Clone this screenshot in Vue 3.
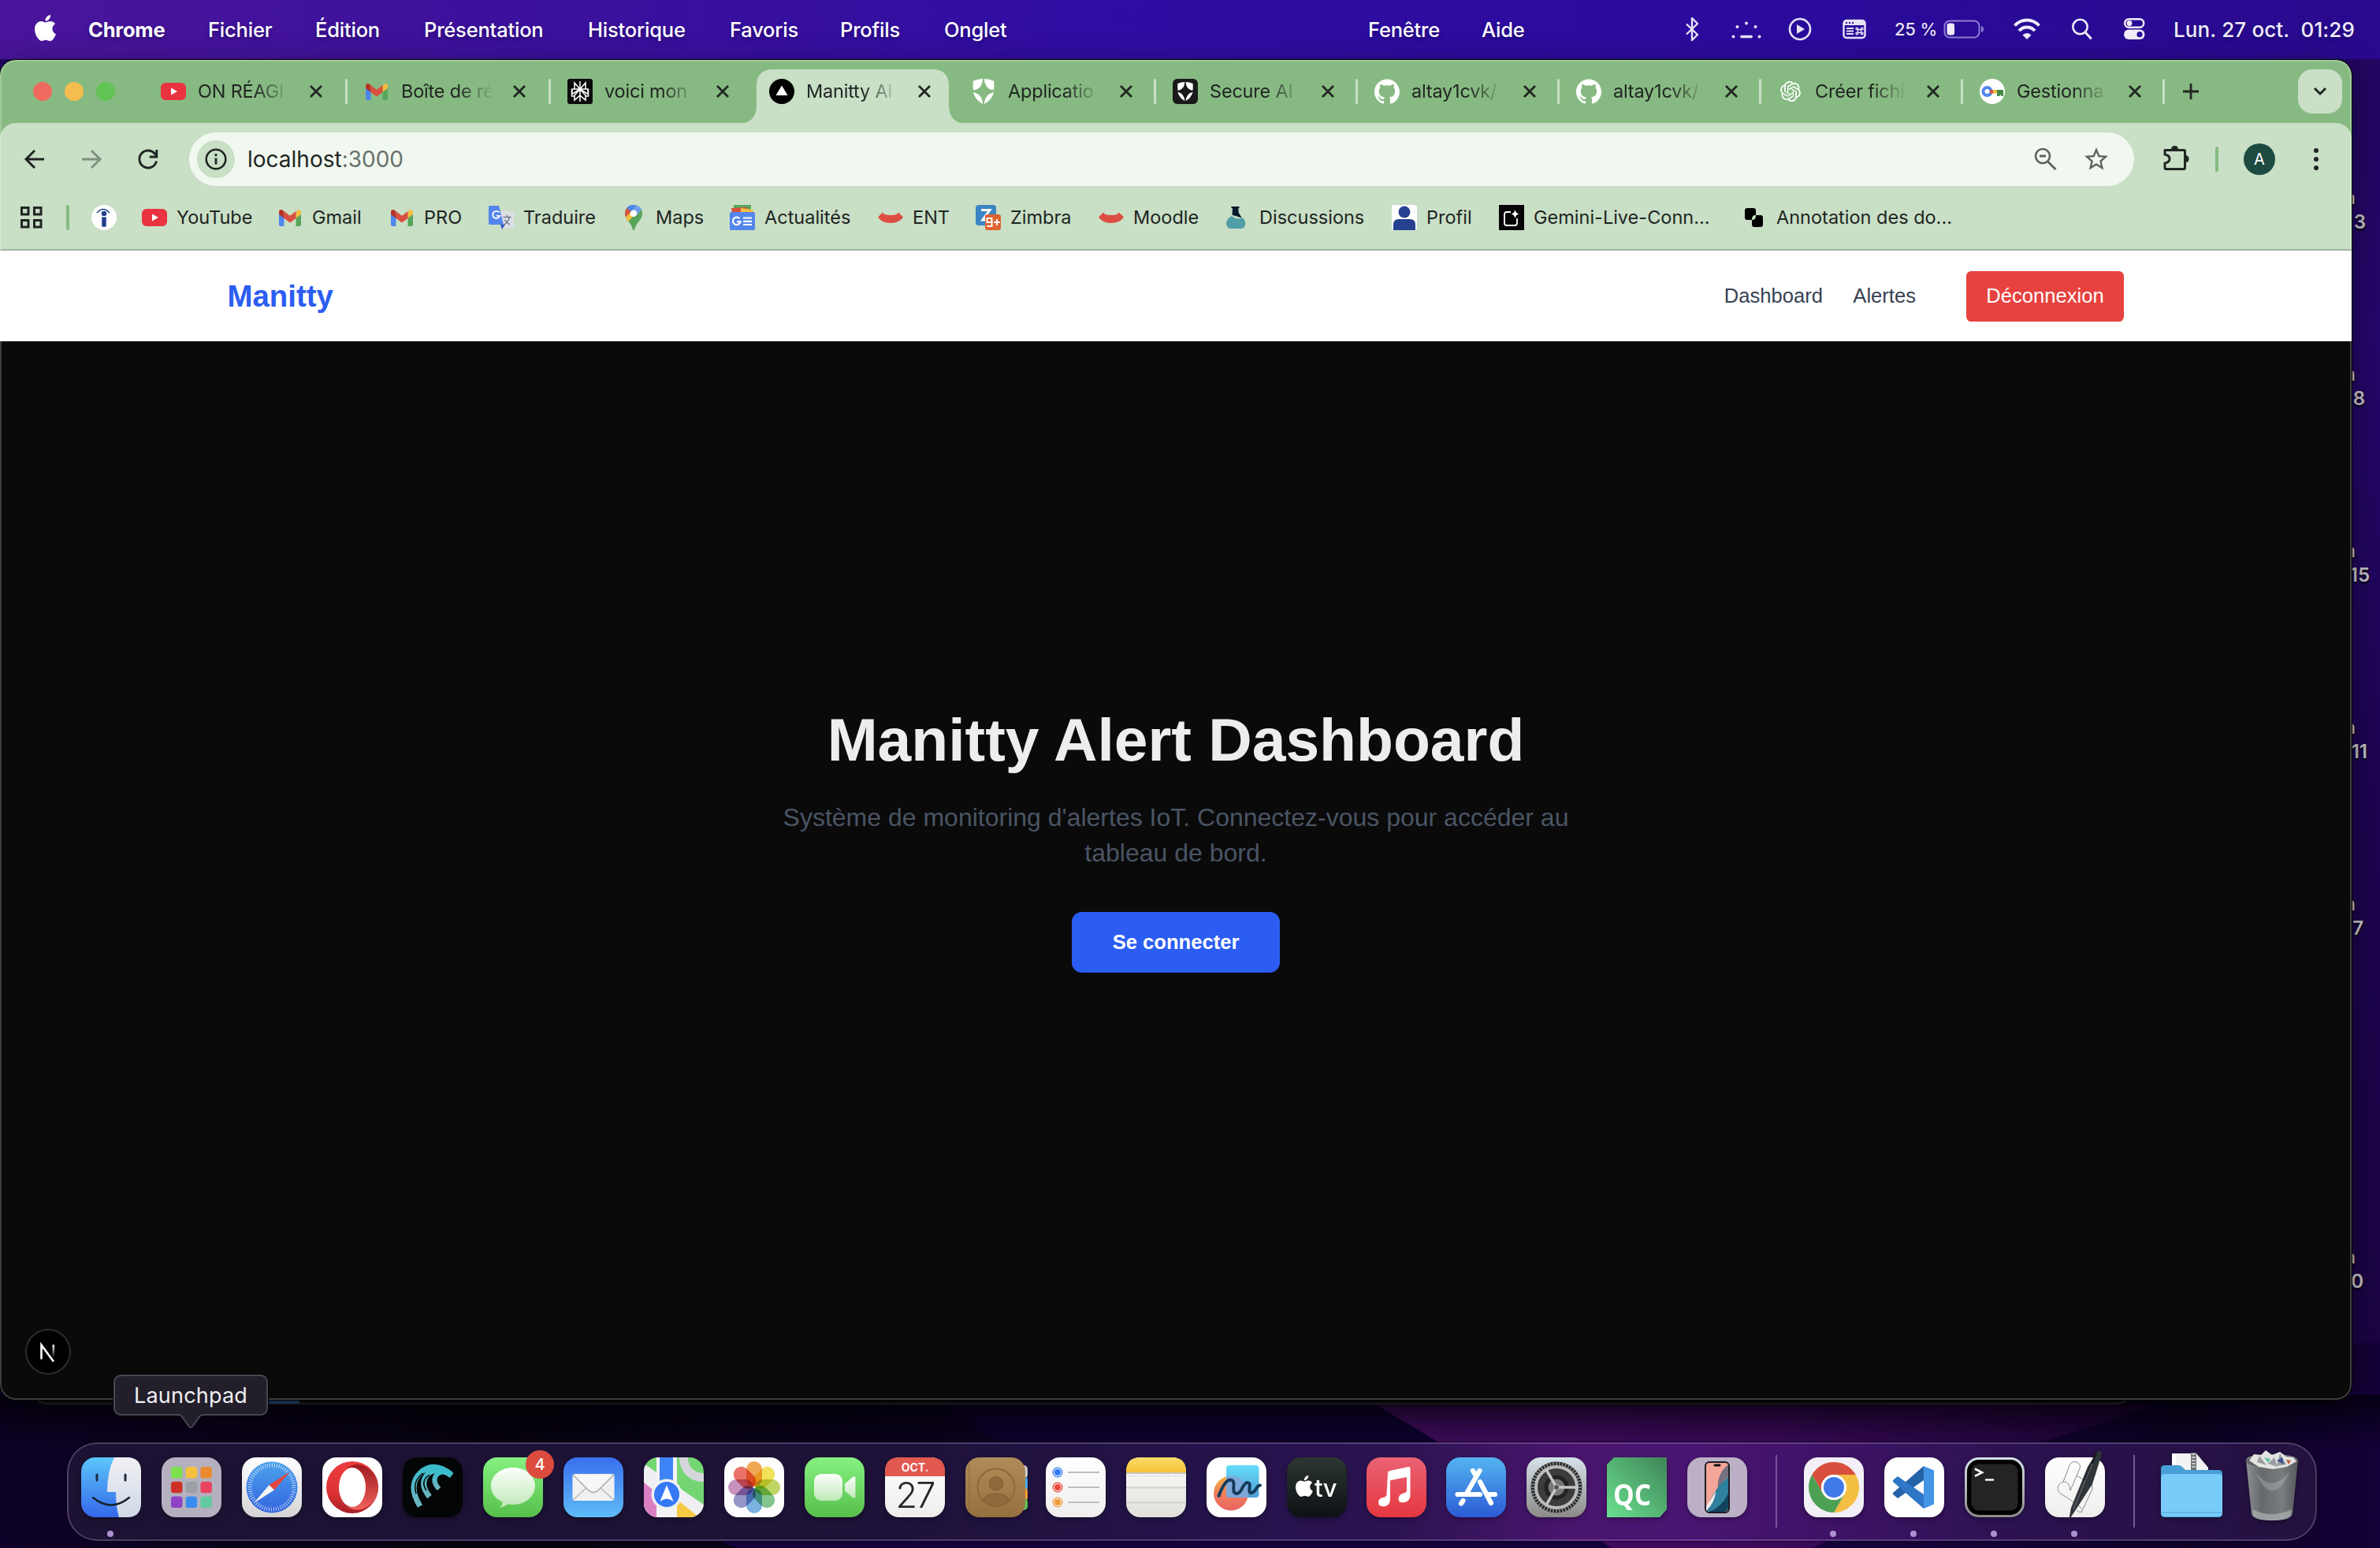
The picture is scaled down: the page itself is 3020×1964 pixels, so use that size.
<script setup>
const menus = [
  { label: 'Chrome', w: 152, strong: true },
  { label: 'Fichier', w: 136 },
  { label: 'Édition', w: 138 },
  { label: 'Présentation', w: 208 },
  { label: 'Historique', w: 180 },
  { label: 'Favoris', w: 140 },
  { label: 'Profils', w: 132 },
  { label: 'Onglet', w: 538 },
  { label: 'Fenêtre', w: 144 },
  { label: 'Aide', w: 257 }
]

const APPLE = 'M12.152 6.896c-.948 0-2.415-1.078-3.96-1.04-2.04.027-3.91 1.183-4.961 3.014-2.117 3.675-.546 9.103 1.519 12.09 1.013 1.454 2.208 3.09 3.792 3.039 1.52-.065 2.09-.987 3.935-.987 1.831 0 2.35.987 3.96.948 1.637-.026 2.676-1.48 3.676-2.948 1.156-1.688 1.636-3.325 1.662-3.415-.039-.013-3.182-1.221-3.22-4.857-.026-3.04 2.48-4.494 2.597-4.559-1.429-2.09-3.623-2.324-4.39-2.376-2-.156-3.675 1.09-4.61 1.09zM15.53 3.83c.843-1.012 1.4-2.427 1.245-3.83-1.207.052-2.662.805-3.532 1.818-.78.896-1.454 2.338-1.273 3.714 1.338.104 2.715-.688 3.559-1.701'
const GITHUB = 'M12 .297c-6.63 0-12 5.373-12 12 0 5.303 3.438 9.8 8.205 11.385.6.113.82-.258.82-.577 0-.285-.01-1.04-.015-2.04-3.338.724-4.042-1.61-4.042-1.61C4.422 18.07 3.633 17.7 3.633 17.7c-1.087-.744.084-.729.084-.729 1.205.084 1.838 1.236 1.838 1.236 1.07 1.835 2.809 1.305 3.495.998.108-.776.417-1.305.76-1.605-2.665-.3-5.466-1.332-5.466-5.93 0-1.31.465-2.38 1.235-3.22-.135-.303-.54-1.523.105-3.176 0 0 1.005-.322 3.3 1.23.96-.267 1.98-.399 3-.405 1.02.006 2.04.138 3 .405 2.28-1.552 3.285-1.23 3.285-1.23.645 1.653.24 2.873.12 3.176.765.84 1.23 1.91 1.23 3.22 0 4.61-2.805 5.625-5.475 5.92.42.36.81 1.096.81 2.22 0 1.606-.015 2.896-.015 3.286 0 .315.21.69.825.57C20.565 22.092 24 17.592 24 12.297c0-6.627-5.373-12-12-12'
const OPENAI = 'M22.2819 9.8211a5.9847 5.9847 0 0 0-.5157-4.9108 6.0462 6.0462 0 0 0-6.5098-2.9A6.0651 6.0651 0 0 0 4.9807 4.1818a5.9847 5.9847 0 0 0-3.9977 2.9 6.0462 6.0462 0 0 0 .7427 7.0966 5.98 5.98 0 0 0 .511 4.9107 6.051 6.051 0 0 0 6.5146 2.9001A5.9847 5.9847 0 0 0 13.2599 24a6.0557 6.0557 0 0 0 5.7718-4.2058 5.9894 5.9894 0 0 0 3.9977-2.9001 6.0557 6.0557 0 0 0-.7475-7.0729zm-9.022 12.6081a4.4755 4.4755 0 0 1-2.8764-1.0408l.1419-.0804 4.7783-2.7582a.7948.7948 0 0 0 .3927-.6813v-6.7369l2.02 1.1686a.071.071 0 0 1 .038.052v5.5826a4.504 4.504 0 0 1-4.4945 4.4944zm-9.6607-4.1254a4.4708 4.4708 0 0 1-.5346-3.0137l.142.0852 4.783 2.7582a.7712.7712 0 0 0 .7806 0l5.8428-3.3685v2.3324a.0804.0804 0 0 1-.0332.0615L9.74 19.9502a4.4992 4.4992 0 0 1-6.1408-1.6464zM2.3408 7.8956a4.485 4.485 0 0 1 2.3655-1.9728V11.6a.7664.7664 0 0 0 .3879.6765l5.8144 3.3543-2.0201 1.1685a.0757.0757 0 0 1-.071 0l-4.8303-2.7865A4.504 4.504 0 0 1 2.3408 7.872zm16.5963 3.8558L13.1038 8.364 15.1192 7.2a.0757.0757 0 0 1 .071 0l4.8303 2.7913a4.4944 4.4944 0 0 1-.6765 8.1042v-5.6772a.79.79 0 0 0-.407-.667zm2.0107-3.0231l-.142-.0852-4.7735-2.7818a.7759.7759 0 0 0-.7854 0L9.409 9.2297V6.8974a.0662.0662 0 0 1 .0284-.0615l4.8303-2.7866a4.4992 4.4992 0 0 1 6.6802 4.66zM8.3065 12.863l-2.02-1.1638a.0804.0804 0 0 1-.038-.0567V6.0742a4.4992 4.4992 0 0 1 7.3757-3.4537l-.142.0805L8.704 5.459a.7948.7948 0 0 0-.3927.6813zm1.0976-2.3654l2.602-1.4998 2.6069 1.4998v2.9994l-2.5974 1.4997-2.6067-1.4997Z'

const shield = '<path d="M15.200 0Q9 .3 2.700 2.700V12.500q.1 2 2 1.800Q14.500 12 15.200 0zM16.800 0Q23 .3 29.300 2.700V12.500q-.1 2-2 1.800Q17.500 12 16.800 0zM2.700 17Q14 19 15.200 32 6 27.500 2.700 17zM29.300 17Q18 19 16.800 32 26 27.500 29.300 17z"/>'
const curve = '<path d="M0 15.500L6 9.500q1.500 3.500 10 3.500t10-3.500l6 6q-5 7.500-16 7.500T0 15.500z" fill="#dc4e41"/>'

// Favicons share a 32-unit square.
const fav = {
  youtube: '<rect y="5" width="32" height="22" rx="6" fill="#ea3340"/><path d="M13 11.500v9l8-4.500z" fill="#fff"/>',
  gmail: '<path d="M2 9v16q0 2 2 2h4.500V13z" fill="#4f86ec"/><path d="M30 9v16q0 2-2 2h-4.500V13z" fill="#58a55c"/><path d="M23.500 8.500l2-1.800C27.500 5 30 6.500 30 9v3l-6.500 5z" fill="#f2be42"/><path d="M8.500 8v9l7.500 5.500 7.500-5.500V8L16 13.700z" fill="#d95040"/><path d="M2 9c0-2.500 2.500-4 4.500-2.300l2 1.600V17L2 12z" fill="#b63125"/>',
  perplexity: '<rect width="32" height="32" rx="3" fill="#0a0a0a"/><g fill="none" stroke="#fff" stroke-width="1.500"><path d="M16 3v26M9 5v8h14V5l-7 8zM16 13L6 19.500V13h4M16 13l10 6.500V13h-4M16 13l-7 8v6l7-6 7 6v-6zM5.500 13v9H9M26.500 13v9H23"/></g>',
  vercel: '<circle cx="16" cy="16" r="16" fill="#000"/><path d="M16 8.500l7.500 12.500H8.500z" fill="#fff"/>',
  auth: `<g fill="#fff">${shield}</g>`,
  authDark: `<rect width="32" height="32" rx="6" fill="#191919"/><g fill="#fff" transform="translate(4.300 4) scale(.73 .75)">${shield}</g>`,
  github: `<path fill="#fff" transform="scale(1.333)" d="${GITHUB}"/>`,
  openai: `<path fill="#fff" transform="translate(3 3) scale(1.080)" d="${OPENAI}"/>`,
  gcloud: '<circle cx="16" cy="16" r="16" fill="#fff"/><circle cx="9.500" cy="16" r="5" fill="none" stroke="#4f86ec" stroke-width="4"/><path d="M13 14h5v4.500h-5z" fill="#d95040"/><path d="M17 14h6v4.500h-6z" fill="#f2be42"/><path d="M22 14h8v8h-2.500l-1-2-1.500 2h-3z" fill="#3f8a45"/>',
  ifac: '<circle cx="16" cy="16" r="16" fill="#fff"/><circle cx="16" cy="11" r="3.300" fill="#24408e"/><path d="M13.200 15.500h5.600V27q-2.800 2-5.600 0z" fill="#24408e"/><path d="M7 10q8-9 16 0" fill="none" stroke="#24408e" stroke-width="1.600"/>',
  translate: '<path d="M13 8h17q2 0 2 2v18q0 2-2 2H18z" fill="#dcdfe3"/><path d="M15 25h6l-4 6z" fill="#3157b8"/><path d="M2 1h11l6 24H2q-2 0-2-2V3q0-2 2-2z" fill="#5386ec"/><path d="M13.500 9.500a4.600 4.600 0 1 0 .8 4.300H9.800" fill="none" stroke="#fff" stroke-width="1.800"/><path d="M18.500 15.500h10M23.500 13v2.500M26.500 16q-2 6-7 9M20.500 19q3 4 6.500 6" fill="none" stroke="#6c7f92" stroke-width="1.400"/>',
  maps: '<path d="M16 0C9 0 5 5 5 11c0 4 1.500 6.500 4 9.500 3.500 4 5 7 5.600 10 .4 2 2.400 2 2.800 0 .6-3 2-6 5.600-10 2.500-3 4-5.500 4-9.500C27 5 23 0 16 0z" fill="#58a55c"/><path d="M16 0C12 0 9 1.500 7.300 4L13 8.500 19.500.6Q18 0 16 0z" fill="#4f86ec"/><path d="M7.300 4Q5 7 5 11q0 2.500.9 4.500L13 8.500z" fill="#d95040"/><path d="M19.500.6L13 8.500l6 5.500 7-8Q24 2 19.500.6z" fill="#6fa0ee"/><path d="M5.900 15.500Q7 18 9.500 21l9.500-11-6-1.500z" fill="#f2be42"/><circle cx="16" cy="10.800" r="4.300" fill="#fff"/>',
  news: '<path d="M5 0h22v10H5z" fill="#58a55c"/><path d="M2 4l20-1 2 8H3z" fill="#d95040"/><path d="M14 4l16 2-1 6H14z" fill="#f2be42"/><rect y="9" width="32" height="23" rx="2" fill="#5386ec"/><path d="M12.500 17.300a4.800 4.800 0 1 0 1 3.900H9M17 16.500h11M17 20.800h11M17 25h11" fill="none" stroke="#fff" stroke-width="2.200"/>',
  curve,
  zimbra: '<rect width="26" height="26" rx="4" fill="#3c84c4"/><path d="M7 6.500h11L9 19h8" fill="none" stroke="#fff" stroke-width="3"/><rect x="12" y="12" width="20" height="20" rx="3" fill="#e0622f"/><g fill="none" stroke="#fff" stroke-width="2"><rect x="14.500" y="17" width="6" height="5"/><path d="M20.500 22v5h-6M23 22h8M27 18v8"/></g>',
  flask: '<path d="M8.500 2h10v2.200h-1.200l.5 5.800 4 6.500-7.800-2.500-4.500-1.200.5-8.600h-1.500z" fill="#04192b"/><path d="M9 14q4 3.500 8.500 3.500l5.500-1q3.500 3.500 3.200 7.500-.7 6-6 6H8q-5.500-.5-6-6Q2 17.500 9 14z" fill="#519ea8"/>',
  profil: '<rect width="32" height="32" rx="3" fill="#fff"/><circle cx="16" cy="9" r="7.500" fill="#26418f"/><path d="M2 32V25q0-7 7-7h14q7 0 7 7v7z" fill="#26418f"/>',
  gemini: '<rect width="32" height="32" fill="#050505"/><path d="M15 9H10q-3 0-3 3v11q0 3 3 3h10q3 0 3-3v-6" fill="none" stroke="#fff" stroke-width="1.800"/><path d="M20.500 6q.8 4.600 5 5.500-4.200.9-5 5.500-.8-4.600-5-5.500 4.200-.9 5-5.500z" fill="#fff"/>',
  annot: '<rect x="4" y="4" width="14" height="15" rx="3" fill="#000"/><rect x="13" y="13" width="14" height="15" rx="3" fill="#000"/><path d="M13 18q0-5 5-5v1q0 5-5 5z" fill="#c9dfc6"/>'
}

const tabs = [
  { icon: 'youtube', title: 'ON RÉAGI', w: 258 },
  { icon: 'gmail', title: 'Boîte de ré', w: 258 },
  { icon: 'perplexity', title: 'voici mon', w: 256, last: true },
  { icon: 'vercel', title: 'Manitty Al', w: 256, active: true, last: true },
  { icon: 'auth', title: 'Applicatio', w: 256 },
  { icon: 'authDark', title: 'Secure AI', w: 256 },
  { icon: 'github', title: 'altay1cvk/', w: 256 },
  { icon: 'github', title: 'altay1cvk/', w: 256 },
  { icon: 'openai', title: 'Créer fichi', w: 256 },
  { icon: 'gcloud', title: 'Gestionna', w: 256 }
]

const bookmarks = [
  { icon: 'ifac', label: '', w: 64 },
  { icon: 'youtube', label: 'YouTube', w: 172 },
  { icon: 'gmail', label: 'Gmail', w: 142 },
  { icon: 'gmail', label: 'PRO', w: 126 },
  { icon: 'translate', label: 'Traduire', w: 168 },
  { icon: 'maps', label: 'Maps', w: 138 },
  { icon: 'news', label: 'Actualités', w: 188 },
  { icon: 'curve', label: 'ENT', w: 124 },
  { icon: 'zimbra', label: 'Zimbra', w: 156 },
  { icon: 'curve', label: 'Moodle', w: 160 },
  { icon: 'flask', label: 'Discussions', w: 212 },
  { icon: 'profil', label: 'Profil', w: 136 },
  { icon: 'gemini', label: 'Gemini-Live-Conn...', w: 308 },
  { icon: 'annot', label: 'Annotation des do...', w: 280 }
]

const bg = (fill) => `<rect width="76" height="76" rx="18" fill="${fill}"/>`
const petals = ['#f09a37', '#f2e03f', '#b5d04a', '#6dbd7c', '#64a7dc', '#8583c0', '#c07fb4', '#ea5a4f']
const pads = ['#7be04c', '#f4c23d', '#e98a2c', '#cf3127', '#9aa0a4', '#ea4560', '#8f42c4', '#3a8df0', '#62c9a0']
const gearTicks = Array.from({ length: 48 }, (_, i) => `<path d="M38 5.500v4.500" transform="rotate(${i * 7.5} 38 38)" stroke="#8d8f90" stroke-width="1.500"/>`).join('')

// Dock artwork shares a 76-unit square.
const art = {
  finder: bg('url(#gFinder)') + '<path d="M42 0h16q18 0 18 18v40q0 18-18 18H48q-4-14-4-32H33q0-26 9-44z" fill="url(#gFace)"/><path d="M20 22v7M56 22v7" stroke="#1c2b3d" stroke-width="3" stroke-linecap="round"/><path d="M15 51q23 19 46 0" fill="none" stroke="#16202c" stroke-width="2.400" stroke-linecap="round"/>',
  launchpad: bg('#b4b0bf') + pads.map((c, i) => `<rect x="${12 + (i % 3) * 18.700}" y="${12 + Math.floor(i / 3) * 18.700}" width="14.500" height="14.500" rx="3.500" fill="${c}"/>`).join(''),
  safari: bg('url(#gSafari)') + '<circle cx="38" cy="38" r="32.500" fill="url(#gCompass)"/><circle cx="38" cy="38" r="28" fill="none" stroke="#fff" stroke-opacity=".8" stroke-width="5" stroke-dasharray=".8 2.130"/><path d="M61 18L34.500 35l6.500 6.500z" fill="#e2483d"/><path d="M15 58l19.500-23 6.500 6.500z" fill="#f4f4f4"/>',
  opera: bg('#fff') + '<ellipse cx="38" cy="38" rx="33" ry="33" fill="url(#gOpera)"/><path d="M30 14Q45 4 58 14q13 9 13 24T58 62q-13 9-28 0 12 4 20-6 6-8 6-18t-6-18q-8-10-20-6z" fill="url(#gOperaIn)"/><ellipse cx="38" cy="38" rx="17" ry="25" fill="#fff"/>',
  wave: bg('#040506') + '<g fill="none" stroke="url(#gWave)" stroke-linecap="butt"><path d="M22 62Q6 36 22 20q17-16 40 2" stroke-width="7"/><path d="M34 50Q21 34 31 22q12-12 31 1" stroke-width="7"/><path d="M46 40Q36 29 44 21q8-6 18 2" stroke-width="6"/></g><path d="M17 46Q12 30 26 20M30 42q-8-12 4-20" fill="none" stroke="#040506" stroke-width="1.500"/>',
  messages: bg('url(#gGreen)') + '<path d="M38 13c16 0 28 10 28 23S54 60 38 60q-4 0-7-.8-4 4-10 4.300 4-3 3.500-7Q10 50 10 36c0-13 12-23 28-23z" fill="url(#gBubble)"/>',
  mail: bg('url(#gMail)') + '<rect x="11.500" y="21" width="53" height="34" rx="3" fill="#f1f1f1"/><path d="M12 54l19-17M64 54L45 37" stroke="#b5b5b5" stroke-width="1.300"/><path d="M12 22l19 19q7 7 14 0l19-19" fill="#f7f7f7" stroke="#aaa" stroke-width="1.500"/>',
  maps: '<clipPath id="cMaps"><rect width="76" height="76" rx="18"/></clipPath><g clip-path="url(#cMaps)"><path d="M0 0h76v76H0z" fill="#74d672"/><path d="M0 8l76 52v16H0z" fill="#efeff3"/><path d="M0 32l18 14v30H0z" fill="#db7fc4"/><path d="M38 50l32 26H38z" fill="#f7c843"/><path d="M16 0h26v76H16z" fill="#f3f3f6"/><path d="M20 0h17v46H20z" fill="#3e83f5"/><path d="M50-4q0 30 30 30" fill="none" stroke="#d5d6da" stroke-width="11"/></g><circle cx="29" cy="47" r="19.500" fill="#eef0f2"/><circle cx="29" cy="47" r="16" fill="#3579f6"/><path d="M29 35l8.500 21q-8.500-7-17 0z" fill="#fff"/>',
  photos: bg('#fdfdfd') + '<g style="mix-blend-mode:multiply">' + petals.map((c, i) => `<rect x="28" y="5" width="20" height="32" rx="10" fill="${c}" opacity=".85" transform="rotate(${i * 45} 38 38)" style="mix-blend-mode:multiply"/>`).join('') + '</g>',
  facetime: bg('url(#gGreen)') + '<rect x="12" y="21" width="36" height="34" rx="9" fill="url(#gBubble)"/><path d="M51 33.500L61 25q3.500-2 3.500 1.500v23q0 3.500-3.500 1.500l-10-8.500z" fill="url(#gBubble)"/>',
  calendar: bg('url(#gPaper)') + '<path d="M0 24v-6Q0 0 18 0h40q18 0 18 18v6z" fill="#e2594f"/><text x="38" y="17.500" text-anchor="middle" font-size="14" font-weight="700" fill="#fff">OCT.</text><text x="38" y="64" text-anchor="middle" font-size="45" font-weight="300" letter-spacing="-2" fill="#262626">27</text>',
  contacts: '<rect x="56" y="10" width="23" height="17" rx="5" fill="#c9c9cc"/><rect x="56" y="25" width="23" height="17" rx="4" fill="#4aa8e8"/><rect x="56" y="39" width="23" height="16" rx="4" fill="#ee9a35"/><rect x="56" y="52" width="23" height="15" rx="5" fill="#5fc255"/>' + bg('url(#gLeather)') + '<g fill="#8f6a3c" stroke="#866236" stroke-width="1.500"><circle cx="39" cy="38" r="23.500" fill="none"/><circle cx="39" cy="33" r="8.500"/><path d="M23 53q5-7 16-7t16 7q-6 9-16 9t-16-9z"/></g><path d="M5 8v60" stroke="#8c693d" stroke-width="1"/>',
  reminders: bg('url(#gPaper)') + ['#2f79f6', '#ea4639', '#f09a37'].map((c, i) => `<circle cx="15" cy="${19 + i * 19}" r="5.800" fill="none" stroke="${c}" stroke-width="1.300"/><circle cx="15" cy="${19 + i * 19}" r="4" fill="${c}"/><path d="M28 ${19 + i * 19}h40" stroke="#bdbdc2" stroke-width="2"/>`).join(''),
  notes: bg('url(#gNotes)') + '<path d="M0 19v-1Q0 0 18 0h40q18 0 18 18v1z" fill="url(#gYellow)"/><path d="M0 20h76" stroke="#b9b4a0" stroke-width="1.500"/><path d="M2 23.500h72" stroke="#bbb" stroke-width="1.500" stroke-dasharray="1 2"/><path d="M0 38.500h76M0 57.500h76" stroke="#d2d2d4" stroke-width="1.800"/>',
  freeform: bg('#fff') + '<circle cx="31" cy="45.500" r="22" fill="url(#gPeach)"/><rect x="25" y="10" width="41.500" height="41" rx="4" fill="url(#gCyan)"/><path d="M25 24.500a22 22 0 0 1 27.500 26.500H29q-4 0-4-4z" fill="#85a6d8" opacity=".85"/><path d="M15.500 49Q23 29 30 28.500q5 0 4.500 7-1.500 10 3.500 10.500 4 0 7-6.500 4-8 7-7.500 4 .5 2.500 6-1 8 2.500 7 3.500-.5 6.500-6 2-3.500 4.500-3.500" fill="none" stroke="#153c5c" stroke-width="4" stroke-linecap="round" stroke-linejoin="round"/>',
  tv: bg('url(#gTv)') + `<path transform="translate(8.500 23) scale(1.120)" fill="#fff" d="${APPLE}"/><text x="35" y="49.500" font-size="31" font-weight="500" letter-spacing="-.5" fill="#fff">tv</text>`,
  music: bg('url(#gMusic)') + '<path d="M27 20q0-2.500 2.500-3L53 12q2.500-.5 2.500 2V48q0 7-7 9-7.500 1.500-8-4 0-6 6.500-7.500 4-.7 4-4V25l-21 4.200V53q0 7-6 9-8.500 1.500-9-4.500 0-5.500 6-6.500 4.500-1 4.500-4z" fill="#fff"/>',
  appstore: bg('url(#gStore)') + '<g stroke="#fff" stroke-width="6.200" stroke-linecap="round"><path d="M42.500 17L27 44M34 17l3 5M43 31l14 27M14.500 47h28.500M54 47h8M21.500 55l-2.500 3.500"/></g>',
  settings: bg('url(#gSteel)') + '<circle cx="38" cy="38" r="32.500" fill="#242527"/>' + gearTicks + '<circle cx="38" cy="38" r="26" fill="#3b3c3e" stroke="#b9bbbd" stroke-width="4"/><circle cx="38" cy="38" r="13" fill="#747678" stroke="#222" stroke-width="5"/><path d="M38 38h26M38 38L25 15.500M38 38L25 60.500" stroke="#c3c5c7" stroke-width="3.500"/><circle cx="38" cy="38" r="3.500" fill="#555" stroke="#c3c5c7"/>',
  qc: '<path d="M0 9L9 0h67v66l-9 10H0z" fill="url(#gQc)"/><text x="8" y="61" font-size="37" font-weight="700" textLength="48" lengthAdjust="spacingAndGlyphs" fill="#fff" font-family="Open Sans, sans-serif">QC</text>',
  phone: bg('#bbb0c6') + '<rect x="23" y="6" width="30" height="64" rx="5" fill="#f3a59a" stroke="#1d1d22" stroke-width="2"/><path d="M52 9v16q-8 4-13 16-2-20 13-32z" fill="#766f7f"/><path d="M52 25v38q0 6-6 6H29q-5 0-5-4 13-30 28-40z" fill="#2f7f9f"/><path d="M52 45v18q0 6-6 6H28q18-8 24-24z" fill="#12445e"/><path d="M24 62q10-14 12-20 0 14-12 26z" fill="#f6ece8"/><rect x="33.500" y="8.500" width="9" height="3" rx="1.500" fill="#111"/>',
  chrome: bg('#f3eff6') + '<g transform="translate(38 38)"><path d="M0-16H27.700A32 32 0 0 0-27.700-16L-13.860 8A16 16 0 0 1 0-16z" fill="#d94f3d"/><path d="M0-16H27.700A32 32 0 0 0-27.700-16L-13.860 8A16 16 0 0 1 0-16z" fill="#f3be42" transform="rotate(120)"/><path d="M0-16H27.700A32 32 0 0 0-27.700-16L-13.860 8A16 16 0 0 1 0-16z" fill="#4da153" transform="rotate(240)"/><circle r="16" fill="#fff"/><circle r="13" fill="#4079e8"/></g>',
  vscode: bg('#fff') + '<path d="M50 11v18L17 52l-6-5v-2z" fill="#2563a8"/><path d="M17 24l33 23v18L11 31v-2z" fill="#2f77c6"/><path d="M50 11l13 5.500v43L50 65z" fill="#4595e6"/>',
  terminal: '<rect width="76" height="76" rx="18" fill="url(#gSteel)"/><rect x="3" y="3" width="70" height="70" rx="15" fill="#000"/><rect x="8.500" y="8.500" width="59" height="59" rx="9" fill="#242424"/><path d="M13 14.500l9 4.700-9 4.700" fill="none" stroke="#fff" stroke-width="2.600"/><path d="M26 28.500h11" stroke="#fff" stroke-width="2.400"/>',
  script: bg('url(#gPaper)') + '<g fill="none" stroke="#8b8b8b" stroke-width="1"><path d="M31 10q3-6 9-4 6 3 4 8L32 42q-1-12-9-11-6 2-7 8 0 6 7 9l18 12q8 6 6 9-4 2-7-2M23 31L31 10M40 23l8 5q14 4 12 12L48 66"/></g><path d="M66-7q6-3 6 3L60 34 38 68l-8 12 3-16L54 12z" fill="#30353a"/><path d="M66-5L52 29h-3L64-6z" fill="#15181a"/><path d="M60 8L36 66" stroke="#5a6066" stroke-width="1.500"/>',
  folder: '<path d="M13-5h31l15 18v14H13z" fill="#f2f2f2"/><path d="M13-5h5v30h-5z" fill="#fff"/><path d="M37-6h7v30h-7z" fill="#6c7073"/><path d="M38-4h5M38 0h5M38 4h5M38 8h5M38 12h5" stroke="#ddd" stroke-width="1.500"/><path d="M-1 15q0-5 5-5h17q3 0 5 2l4 4h42q5 0 5 5v50q0 5-5 5H4q-5 0-5-5z" fill="#479fd7"/><path d="M-1 26q0-5 5-5h68q5 0 5 5v44q0 5-5 5H4q-5 0-5-5z" fill="#79cbf9"/><path d="M0 70h76" stroke="#5fb4e6" stroke-width="2"/>',
  trash: '<path d="M5 4q0-8 33-8t33 8l-7 68q-2 8-26 8t-26-8z" fill="url(#gBin)"/><ellipse cx="38" cy="5" rx="33" ry="8" fill="#5f6264"/><path d="M9 4l6-8 9 1 6-6 8 6 10-4 8 6 9 1 4 5-12 7-18 3-18-3z" fill="#e3e3e1"/><path d="M22-2l9 12-12-4zM48-5l8 14-12 2zM33 8l8-8 4 12z" fill="#9a9d9f"/><path d="M28 0l8 2-3 5z" fill="#5fc2a0"/><path d="M44 4l7-4 2 9z" fill="#3e538f"/><path d="M56 3l6 1-3 5z" fill="#c25a3a"/><path d="M18 20q20 26 42-2-8 22-20 24T18 20z" fill="#b5b8ba" opacity=".4"/><path d="M13 66q25 12 50 0l-1 7q-3 7-24 7t-24-7z" fill="#b4b7b9" opacity=".65"/>'
}

const dock = [
  { icon: 'finder', run: true }, { icon: 'launchpad' }, { icon: 'safari' }, { icon: 'opera' }, { icon: 'wave' },
  { icon: 'messages', badge: 4 }, { icon: 'mail' }, { icon: 'maps' }, { icon: 'photos' }, { icon: 'facetime' },
  { icon: 'calendar' }, { icon: 'contacts' }, { icon: 'reminders' }, { icon: 'notes' }, { icon: 'freeform' },
  { icon: 'tv' }, { icon: 'music', w: 100 }, { icon: 'appstore' }, { icon: 'settings' }, { icon: 'qc' }, { icon: 'phone' },
  { sep: true },
  { icon: 'chrome', run: true }, { icon: 'vscode', run: true }, { icon: 'terminal', run: true }, { icon: 'script', run: true },
  { sep: true },
  { icon: 'folder' }, { icon: 'trash' }
]

// Captions of desktop files, mostly hidden behind the browser window.
const files = [
  { text: '3', y: 235, right: 18 },
  { text: '8', y: 459, right: 19 },
  { text: '15', y: 683, right: 13 },
  { text: '11', y: 907, right: 16 },
  { text: '7', y: 1131, right: 21 },
  { text: '0', y: 1579, right: 21 }
]
</script>

<template>
  <div class="screen">
    <svg class="wallpaper" viewBox="0 0 3020 1964">
      <defs>
        <linearGradient id="wSide" x1="0" y1="0" x2="0" y2="1"><stop offset="0" stop-color="#22065f" /><stop offset=".25" stop-color="#24076a" /><stop offset=".6" stop-color="#1c0450" /><stop offset="1" stop-color="#1a0444" /></linearGradient>
        <linearGradient id="wBase" x1="0" y1="0" x2="1" y2="0"><stop offset="0" stop-color="#0e0228" /><stop offset=".2" stop-color="#07020f" /><stop offset=".5" stop-color="#0c0228" /><stop offset=".8" stop-color="#16023a" /><stop offset=".92" stop-color="#0d0226" /><stop offset="1" stop-color="#130137" /></linearGradient>
        <linearGradient id="wPurple" x1="0" y1="0" x2="1" y2="0"><stop offset="0" stop-color="#440d62" /><stop offset=".5" stop-color="#3b0a5c" /><stop offset="1" stop-color="#1d0439" /></linearGradient>
        <linearGradient id="wShade" x1="0" y1="0" x2="0" y2="1"><stop offset="0" stop-color="#000" stop-opacity=".62" /><stop offset="1" stop-color="#000" stop-opacity="0" /></linearGradient>
      </defs>
      <path d="M0 0h3020v1704H0z" fill="url(#wSide)" />
      <path d="M0 1704h3020v260H0z" fill="url(#wBase)" />
      <path d="M1190 1780L1270 1830 1500 1964H2045L1750 1780z" fill="#0f0230" />
      <path d="M900 1950h1140v14H935z" fill="#12023a" />
      <path d="M1747 1783H2735L2590 1830 2300 1964H2045L1826 1830z" fill="url(#wPurple)" />
      <path d="M0 1770h3020v70H0z" fill="url(#wShade)" />
    </svg>

    <div v-for="f in files" :key="f.y" class="file" :style="{ top: f.y + 'px' }">
      <span class="file-end">n</span>
      <span :style="{ marginRight: f.right + 'px' }">{{ f.text }}</span>
    </div>

    <header class="menubar">
      <svg class="apple" viewBox="0 0 24 24"><path :d="APPLE" fill="#fff" /></svg>
      <span v-for="m in menus" :key="m.label" :class="{ strong: m.strong }" :style="{ width: m.w + 'px' }">{{ m.label }}</span>
      <svg class="s60" viewBox="0 0 60 30"><path d="M3 8.500L17 22l-7 7V1l7 7L3 21.500" fill="none" stroke="#e8e2f6" stroke-width="2.400" stroke-linejoin="round" /></svg>
      <svg class="s72" viewBox="0 0 72 30"><g fill="#e8e2f6"><circle cx="19" cy="7.500" r="2" /><circle cx="7.500" cy="12" r="2" /><circle cx="30.500" cy="12" r="2" /><circle cx="2.500" cy="24.500" r="2" /><circle cx="35.500" cy="24.500" r="2" /><rect x="11" y="22.700" width="16" height="3.600" rx="1.800" /></g></svg>
      <svg class="s69" viewBox="0 0 69 30"><circle cx="15" cy="15" r="13" fill="none" stroke="#e8e2f6" stroke-width="2.600" /><path d="M11 9l10 6-10 6z" fill="#e8e2f6" /></svg>
      <svg class="s66" viewBox="0 0 66 30"><rect x="1.500" y="4" width="27" height="22" rx="3.500" fill="none" stroke="#e8e2f6" stroke-width="2.400" /><path d="M2 5h26v5H2z" fill="#e8e2f6" /><path d="M4 7h2M8 7h2M12 7h2" stroke="#2c0b9c" stroke-width="1.800" /><path d="M5 14h9M5 17.500h9M5 21h9" stroke="#e8e2f6" stroke-width="1.800" /><g fill="none" stroke="#e8e2f6" stroke-width="1.400"><path d="M19.500 15.500h4v4h-4z" /><circle cx="18.300" cy="14.500" r="1.300" /><circle cx="24.700" cy="14.500" r="1.300" /><circle cx="18.300" cy="20.500" r="1.300" /><circle cx="24.700" cy="20.500" r="1.300" /></g></svg>
      <div class="battery"><span>25 %</span><svg width="54" height="30" viewBox="0 0 54 30"><rect x="3.500" y="4.500" width="44" height="21" rx="6.500" fill="none" stroke="#8f7fd0" stroke-width="2" /><rect x="6.500" y="7.500" width="9.500" height="15" rx="3" fill="#efeafa" /><path d="M50 11q3 1 3 4t-3 4z" fill="#8f7fd0" /></svg></div>
      <svg class="s74" viewBox="0 0 74 30"><g fill="none" stroke="#f0ecfa" stroke-width="4"><path d="M2.500 10.500Q9 3.500 18 3.500t15.500 7" /><path d="M8 17q4-4.500 10-4.500t10 4.500" /></g><path d="M12.500 22.500q2.500-2.500 5.500-2.500t5.500 2.500L18 28z" fill="#f0ecfa" /></svg>
      <svg class="s66" viewBox="0 0 66 30"><circle cx="11.500" cy="12" r="9.200" fill="none" stroke="#f0ecfa" stroke-width="2.600" /><path d="M18 19l7 7.500" stroke="#f0ecfa" stroke-width="3" stroke-linecap="round" /></svg>
      <svg class="s64" viewBox="0 0 64 30"><rect x="2.200" y="2.200" width="24" height="10.500" rx="5.200" fill="none" stroke="#f0ecfa" stroke-width="2.400" /><circle cx="8" cy="7.500" r="3.400" fill="#f0ecfa" /><rect x="1" y="15.500" width="26.500" height="12.500" rx="6.200" fill="#f0ecfa" /><circle cx="21" cy="21.700" r="3.600" fill="#2c0b9c" /></svg>
      <span class="clock">Lun. 27 oct.&nbsp; 01:29</span>
    </header>

    <div class="back-window"><i></i></div>

    <main class="window">
      <div class="tabstrip">
        <div class="lights"><i class="red"></i><i class="amber"></i><i class="green"></i></div>
        <div v-for="(t, i) in tabs" :key="i" class="tab" :style="{ width: t.w + 'px' }">
          <svg v-if="t.active" class="tab-shape" viewBox="0 0 292 69"><path d="M0 69q24 0 24-24V21Q24 0 45 0H247q21 0 21 21V45q0 24 24 24z" fill="#c9dfc6" /></svg>
          <svg class="fav" viewBox="0 0 32 32" v-html="fav[t.icon]"></svg>
          <span class="title">{{ t.title }}</span>
          <svg class="close" viewBox="0 0 18 18"><path d="M2 2l14 14M16 2L2 16" stroke="#202522" stroke-width="2.800" /></svg>
          <i v-if="!t.last" class="sep"></i>
        </div>
        <svg class="plus" viewBox="0 0 22 22"><path d="M11 1v20M1 11h20" stroke="#202522" stroke-width="2.800" /></svg>
        <div class="chevron"><svg width="18" height="12" viewBox="0 0 18 12"><path d="M2 2l7 7 7-7" fill="none" stroke="#202522" stroke-width="3" /></svg></div>
      </div>

      <div class="chrome-body">
        <div class="toolbar">
          <svg class="nav" viewBox="0 0 32 32"><path d="M28 16H6M16 5L5 16l11 11" fill="none" stroke="#202522" stroke-width="2.900" /></svg>
          <svg class="nav faded" viewBox="0 0 32 32"><path d="M4 16h22M16 5l11 11-11 11" fill="none" stroke="#202522" stroke-width="2.900" /></svg>
          <svg class="nav" viewBox="0 0 32 32"><path d="M26.600 18.500A11 11 0 1 1 24 8.500l2.500 2.800" fill="none" stroke="#202522" stroke-width="2.900" /><path d="M26.800 4v9h-9" fill="none" stroke="#202522" stroke-width="2.900" /></svg>
          <div class="omnibox">
            <div class="info"><svg width="28" height="28" viewBox="0 0 28 28"><circle cx="14" cy="14" r="12.300" fill="none" stroke="#202522" stroke-width="2.600" /><path d="M14 12.500v8" stroke="#202522" stroke-width="2.800" /><circle cx="14" cy="8.600" r="1.700" fill="#202522" /></svg></div>
            <span class="url">localhost<em>:3000</em></span>
            <svg class="omni-icon" viewBox="0 0 32 32"><circle cx="12" cy="12" r="9" fill="none" stroke="#5d655f" stroke-width="2.700" /><path d="M18.500 19l10 10M8 12h8" stroke="#5d655f" stroke-width="2.900" /></svg>
            <svg class="omni-star" viewBox="0 0 24 24"><path fill="#5d655f" d="M22 9.240l-7.190-.62L12 2 9.190 8.630 2 9.240l5.460 4.730L5.820 21 12 17.270 18.180 21l-1.630-7.030L22 9.240zM12 15.400l-3.760 2.270 1-4.280-3.320-2.880 4.380-.38L12 6.100l1.710 4.040 4.380.38-3.320 2.880 1 4.280L12 15.400z" /></svg>
          </div>
          <svg class="puzzle" viewBox="0 0 36 36"><path d="M4 7.500h24q1.500 0 1.500 1.500v21q0 1.500-1.500 1.500H5.500Q4 31.500 4 30V24q6-1 6-5.500T4 13z" fill="none" stroke="#202522" stroke-width="3" stroke-linejoin="round" /><path d="M12 7q0-5 4.500-5T21 7zM30 14q4.500 0 4.500 4.500T30 23z" fill="#202522" /></svg>
          <i class="tsep"></i>
          <div class="avatar">A</div>
          <svg class="dots" viewBox="0 0 8 32"><circle cx="4" cy="5" r="3" /><circle cx="4" cy="16" r="3" /><circle cx="4" cy="27" r="3" /></svg>
        </div>

        <div class="bookmarks">
          <svg class="apps" viewBox="0 0 28 28"><g fill="none" stroke="#202522" stroke-width="3"><rect x="1.500" y="1.500" width="8.500" height="8.500" /><rect x="17.500" y="1.500" width="8.500" height="8.500" /><rect x="1.500" y="17.500" width="8.500" height="8.500" /><rect x="17.500" y="17.500" width="8.500" height="8.500" /></g></svg>
          <i class="bsep"></i>
          <div v-for="(b, i) in bookmarks" :key="i" class="bm" :style="{ width: b.w + 'px' }">
            <svg class="fav" viewBox="0 0 32 32" v-html="fav[b.icon]"></svg>
            <span>{{ b.label }}</span>
          </div>
        </div>
      </div>

      <nav class="site-nav">
        <span class="brand">Manitty</span>
        <div class="links">
          <a>Dashboard</a>
          <a>Alertes</a>
          <button class="logout">Déconnexion</button>
        </div>
      </nav>

      <section class="hero">
        <h1>Manitty Alert Dashboard</h1>
        <p>Système de monitoring d'alertes IoT. Connectez-vous pour accéder au tableau de bord.</p>
        <button class="login">Se connecter</button>
      </section>

      <div class="next-badge">
        <svg width="58" height="58" viewBox="0 0 58 58"><defs><linearGradient id="gN" x1="0" y1="0" x2="0" y2="1"><stop offset="0" stop-color="#fff" /><stop offset="1" stop-color="#fff" stop-opacity=".1" /></linearGradient></defs><circle cx="29" cy="29" r="28" fill="#000" stroke="#2c2c2c" stroke-width="2" /><path d="M20.500 38.500V20.500L36 41.500" fill="none" stroke="#fff" stroke-width="2.600" /><rect x="34.500" y="20" width="2.600" height="15" fill="url(#gN)" /></svg>
      </div>
    </main>

    <div class="tooltip">
      Launchpad
      <svg class="arrow" viewBox="0 0 44 20"><path d="M0 0V2h6q4 0 6 4l8 11q2 2.500 4 0l8-11q2-4 6-4h6V0z" fill="#221f2b" /><path d="M0 2h6q4 0 6 4l8 11q2 2.500 4 0l8-11q2-4 6-4h6" fill="none" stroke="#4a4753" stroke-width="2" /></svg>
    </div>

    <footer class="dock">
      <svg width="0" height="0" class="defs">
        <defs>
          <linearGradient id="gFinder" x1="0" y1="0" x2="0" y2="1"><stop offset="0" stop-color="#5cc6fa" /><stop offset="1" stop-color="#3468ea" /></linearGradient>
          <linearGradient id="gFace" x1="0" y1="0" x2="0" y2="1"><stop offset="0" stop-color="#f0f0f4" /><stop offset="1" stop-color="#ced8e6" /></linearGradient>
          <linearGradient id="gSafari" x1="0" y1="0" x2="0" y2="1"><stop offset="0" stop-color="#fff" /><stop offset="1" stop-color="#d4d4d4" /></linearGradient>
          <linearGradient id="gCompass" x1="0" y1="0" x2="0" y2="1"><stop offset="0" stop-color="#4ba2ec" /><stop offset="1" stop-color="#3465e0" /></linearGradient>
          <linearGradient id="gOpera" x1="0" y1="0" x2="0" y2="1"><stop offset="0" stop-color="#ee3d3f" /><stop offset=".6" stop-color="#dd3336" /><stop offset="1" stop-color="#a81f24" /></linearGradient>
          <linearGradient id="gOperaIn" x1="0" y1="0" x2="0" y2="1"><stop offset="0" stop-color="#9c1a1d" /><stop offset="1" stop-color="#f0625c" /></linearGradient>
          <linearGradient id="gWave" x1="0" y1="0" x2="0" y2="1"><stop offset="0" stop-color="#3bbccc" /><stop offset="1" stop-color="#6fb4bf" /></linearGradient>
          <linearGradient id="gGreen" x1="0" y1="0" x2="0" y2="1"><stop offset="0" stop-color="#86f182" /><stop offset="1" stop-color="#57bf4a" /></linearGradient>
          <linearGradient id="gBubble" x1="0" y1="0" x2="0" y2="1"><stop offset="0" stop-color="#fbfffa" /><stop offset="1" stop-color="#bfe9b8" /></linearGradient>
          <linearGradient id="gMail" x1="0" y1="0" x2="0" y2="1"><stop offset="0" stop-color="#3a6fee" /><stop offset="1" stop-color="#5ebcf6" /></linearGradient>
          <linearGradient id="gPaper" x1="0" y1="0" x2="0" y2="1"><stop offset="0" stop-color="#fff" /><stop offset="1" stop-color="#efeeed" /></linearGradient>
          <linearGradient id="gNotes" x1="0" y1="0" x2="0" y2="1"><stop offset="0" stop-color="#fff" /><stop offset="1" stop-color="#e0dfda" /></linearGradient>
          <linearGradient id="gYellow" x1="0" y1="0" x2="0" y2="1"><stop offset="0" stop-color="#fbdc6a" /><stop offset="1" stop-color="#f6c436" /></linearGradient>
          <linearGradient id="gLeather" x1="0" y1="0" x2="0" y2="1"><stop offset="0" stop-color="#ae8c58" /><stop offset="1" stop-color="#96713f" /></linearGradient>
          <linearGradient id="gPeach" x1="0" y1="0" x2="0" y2="1"><stop offset="0" stop-color="#f2b040" /><stop offset=".5" stop-color="#ee7f5c" /><stop offset="1" stop-color="#ec6460" /></linearGradient>
          <linearGradient id="gCyan" x1="0" y1="0" x2="0" y2="1"><stop offset="0" stop-color="#66dcfc" /><stop offset="1" stop-color="#4f9fd2" /></linearGradient>
          <linearGradient id="gTv" x1="0" y1="0" x2="0" y2="1"><stop offset="0" stop-color="#2c3632" /><stop offset="1" stop-color="#0d1114" /></linearGradient>
          <linearGradient id="gMusic" x1="0" y1="0" x2="0" y2="1"><stop offset="0" stop-color="#ea6274" /><stop offset="1" stop-color="#e63840" /></linearGradient>
          <linearGradient id="gStore" x1="0" y1="0" x2="0" y2="1"><stop offset="0" stop-color="#54b4f0" /><stop offset="1" stop-color="#2b5bd6" /></linearGradient>
          <linearGradient id="gSteel" x1="0" y1="0" x2="0" y2="1"><stop offset="0" stop-color="#d5e2ea" /><stop offset="1" stop-color="#8c8a88" /></linearGradient>
          <linearGradient id="gQc" x1="0" y1="1" x2="1" y2="0"><stop offset="0" stop-color="#6ae08f" /><stop offset="1" stop-color="#3f8558" /></linearGradient>
          <linearGradient id="gBin" x1="0" y1="0" x2="1" y2="0"><stop offset="0" stop-color="#8d9092" /><stop offset=".3" stop-color="#66696b" /><stop offset=".7" stop-color="#7a7d7f" /><stop offset="1" stop-color="#54575a" /></linearGradient>
        </defs>
      </svg>
      <template v-for="(d, i) in dock" :key="i">
        <i v-if="d.sep" class="dsep"></i>
        <div v-else class="app" :style="{ width: (d.w || 102) + 'px' }">
          <svg class="art" viewBox="0 0 76 76" v-html="art[d.icon]"></svg>
          <b v-if="d.badge" class="badge">{{ d.badge }}</b>
          <i v-if="d.run" class="running"></i>
        </div>
      </template>
    </footer>
  </div>
</template>

<style>
html,
body {
  margin: 0;
  overflow: hidden;
}
</style>

<style scoped>
.screen {
  position: relative;
  width: 3020px;
  height: 1964px;
  overflow: hidden;
  background: #0a0220;
  font-family: Inter, "Noto Sans", sans-serif;
}
.screen *,
.screen *::before {
  box-sizing: border-box;
}
.screen svg {
  display: block;
  flex: none;
}
.wallpaper {
  position: absolute;
  inset: 0;
  width: 3020px;
  height: 1964px;
}
.file {
  position: absolute;
  right: 0;
  display: flex;
  flex-direction: column;
  align-items: flex-end;
  font-size: 24px;
  line-height: 31px;
  font-weight: 600;
  color: #c6c3c8;
  text-shadow: 0 2px 3px #000;
}
.file-end {
  margin-right: 31px;
}

.menubar {
  position: relative;
  display: flex;
  align-items: center;
  height: 75px;
  padding: 0 0 1px 41px;
  background: linear-gradient(90deg, #49159a 0, #3d119c 20%, #300da2 45%, #2a0b9c 75%, #290a8e 100%);
  color: #fff;
  font-size: 25.500px;
  font-weight: 500;
  letter-spacing: -0.2px;
  white-space: nowrap;
  text-shadow: 0 3px 5px rgba(10, 0, 50, 0.4);
}
.menubar > * {
  flex: none;
}
.menubar .strong {
  font-weight: 700;
}
.menubar svg {
  height: 30px;
}
.menubar .apple {
  width: 33px;
  height: 33px;
  margin: -3px 38px 0 0;
}
.s60 { width: 60px; }
.s72 { width: 72px; }
.s69 { width: 69px; }
.s66 { width: 66px; }
.s74 { width: 74px; }
.s64 { width: 64px; }
.battery {
  display: flex;
  align-items: center;
  justify-content: space-between;
  width: 114px;
  margin-right: 36px;
  font-size: 22px;
  color: #e8e2f6;
}
.clock {
  color: #f0ecfa;
  font-size: 26px;
  letter-spacing: 0.130px;
}

.back-window {
  position: absolute;
  left: 40px;
  top: 1700px;
  width: 2666px;
  height: 82px;
  background: #0b0b0b;
  border: 2px solid #242326;
  border-radius: 20px;
}
.back-window i {
  position: absolute;
  left: 280px;
  bottom: -1px;
  width: 58px;
  height: 5px;
  background: #1b3d66;
}

.window {
  position: absolute;
  left: 0;
  top: 76px;
  width: 2984px;
  height: 1700px;
  display: flex;
  flex-direction: column;
  border-radius: 20px;
  background: #0a0a0a;
  overflow: hidden;
  box-shadow: 0 0 0 1px #000, 0 10px 40px rgba(0, 0, 0, 0.45);
}
.window::after {
  content: "";
  box-sizing: border-box;
  position: absolute;
  inset: 0;
  border: 2px solid rgba(255, 255, 255, 0.22);
  border-radius: 20px;
  pointer-events: none;
}
.tabstrip {
  display: flex;
  align-items: center;
  height: 80px;
  background: #87ba82;
}
.lights {
  display: flex;
  gap: 16px;
  width: 184px;
  padding-left: 42px;
}
.lights i {
  width: 24px;
  height: 24px;
  border-radius: 50%;
}
.red { background: #ee6a5f; }
.amber { background: #f5bd4f; }
.green { background: #61c454; }
.tab {
  position: relative;
  display: flex;
  align-items: center;
  height: 80px;
  padding-left: 20px;
}
.tab > * {
  position: relative;
}
.tab .tab-shape {
  position: absolute;
  left: -20px;
  top: 12px;
  width: 292px;
  height: 69px;
}
.fav {
  width: 32px;
  height: 32px;
  overflow: hidden;
}
.title {
  width: 124px;
  margin-left: 15px;
  white-space: nowrap;
  font-size: 23.500px;
  line-height: 34px;
  letter-spacing: -0.2px;
  color: #202522;
  mask-image: linear-gradient(90deg, #000 58%, transparent 94%);
}
.close {
  width: 18px;
  height: 18px;
  margin-left: 17px;
}
.sep {
  width: 3px;
  height: 32px;
  margin-left: auto;
  margin-right: 1px;
  border-radius: 2px;
  background: #c9dfc6;
}
.plus {
  width: 22px;
  height: 22px;
  margin-left: 21px;
}
.chevron {
  display: flex;
  align-items: center;
  justify-content: center;
  width: 56px;
  height: 56px;
  margin: 0 12px 0 auto;
  border-radius: 18px;
  background: #c9dfc6;
}
.chrome-body {
  position: relative;
  height: 162px;
  flex: none;
  background: linear-gradient(#87ba82 0 24px, transparent 24px);
}
.chrome-body::before {
  content: "";
  position: absolute;
  inset: 0;
  background: #c9dfc6;
  border-radius: 20px 20px 0 0;
  border-bottom: 2px solid #9fb5a2;
}
.toolbar {
  position: relative;
  display: flex;
  align-items: center;
  height: 92px;
  padding-left: 28px;
}
.nav {
  width: 32px;
  height: 32px;
  margin-right: 40px;
}
.faded {
  opacity: 0.42;
}
.omnibox {
  display: flex;
  align-items: center;
  width: 2468px;
  height: 68px;
  margin-left: -4px;
  padding-left: 10px;
  border-radius: 34px;
  background: #f1f8f0;
}
.info {
  display: flex;
  align-items: center;
  justify-content: center;
  width: 48px;
  height: 48px;
  border-radius: 50%;
  background: #c9dfc6;
}
.url {
  margin-left: 16px;
  font-size: 28px;
  color: #202522;
}
.url em {
  font-style: normal;
  color: #69716b;
}
.omni-icon {
  width: 32px;
  height: 32px;
  margin-left: auto;
}
.omni-star {
  width: 36px;
  height: 36px;
  margin: 0 30px 0 30px;
}
.puzzle {
  width: 36px;
  height: 36px;
  margin: -3px 0 0 35px;
}
.tsep {
  width: 4px;
  height: 32px;
  margin-left: 32px;
  border-radius: 2px;
  background: #87ba82;
}
.avatar {
  width: 40px;
  height: 40px;
  margin-left: 32px;
  border-radius: 50%;
  background: #1e4b41;
  color: #fff;
  font-size: 20px;
  line-height: 40px;
  text-align: center;
}
.dots {
  width: 8px;
  height: 32px;
  margin-left: 48px;
  fill: #202522;
}
.bookmarks {
  position: relative;
  display: flex;
  align-items: center;
  height: 56px;
  padding-left: 26px;
}
.apps {
  width: 28px;
  height: 28px;
}
.bsep {
  width: 4px;
  height: 32px;
  margin: 0 28px 0 30px;
  border-radius: 2px;
  background: #87ba82;
}
.bm {
  display: flex;
  align-items: center;
  gap: 12px;
  white-space: nowrap;
  font-size: 23.500px;
  color: #202522;
}
.bm span {
  padding-bottom: 1px;
}

.site-nav {
  display: flex;
  align-items: center;
  justify-content: space-between;
  flex: none;
  height: 115px;
  padding: 0 289px 0 288.500px;
  background: #fff;
  font-family: "Liberation Sans", Arial, sans-serif;
}
.brand {
  font-size: 38.400px;
  font-weight: 700;
  color: #2b5df2;
}
.links {
  display: flex;
  align-items: center;
  font-size: 25.600px;
  color: #364153;
}
.links a + a {
  margin-left: 38.400px;
}
.logout {
  width: 200px;
  height: 64px;
  margin-left: 64px;
  border: 0;
  padding: 0;
  border-radius: 6.400px;
  background: #e7423f;
  color: #fff;
  font: 25.600px "Liberation Sans", Arial, sans-serif;
}
.hero {
  display: flex;
  flex-direction: column;
  align-items: center;
  padding-top: 467px;
  font-family: "Liberation Sans", Arial, sans-serif;
  text-align: center;
}
.hero h1 {
  margin: 0 0 38px;
  font-size: 76.800px;
  line-height: 77px;
  font-weight: 700;
  color: #ededed;
}
.hero p {
  width: 1075px;
  margin: 0 0 52px;
  font-size: 32px;
  line-height: 44.800px;
  color: #4a5565;
}
.login {
  width: 264px;
  height: 77px;
  border: 0;
  padding: 0;
  border-radius: 12.800px;
  background: #2b5df2;
  color: #fff;
  font: 700 25.600px "Liberation Sans", Arial, sans-serif;
}
.next-badge {
  position: absolute;
  left: 32px;
  top: 1610px;
}

.tooltip {
  position: absolute;
  left: 144px;
  top: 1744px;
  width: 196px;
  height: 52px;
  border: 2px solid #4a4753;
  border-radius: 9px;
  background: #221f2b;
  box-shadow: 0 0 0 1px #000;
  color: #f0eff2;
  font-size: 27px;
  line-height: 50px;
  letter-spacing: 0.2px;
  text-align: center;
}
.tooltip .arrow {
  position: absolute;
  left: 74px;
  top: 47px;
  width: 44px;
  height: 20px;
}

.dock {
  position: absolute;
  left: 85px;
  top: 1830px;
  width: 2855px;
  height: 125px;
  display: flex;
  padding-left: 3px;
  border: 2px solid rgba(190, 160, 225, 0.3);
  border-radius: 38px;
  background: linear-gradient(90deg, #1d1233 0, #1e1238 36%, #24134a 50%, #2b1351 59%, #4a156e 67%, #4a1572 72%, #411369 77%, #2b1250 87%, #23123f 100%);
  box-shadow: 0 0 0 1px rgba(0, 0, 0, 0.6);
}
.defs {
  position: absolute;
}
.app {
  position: relative;
  flex: none;
  display: flex;
  justify-content: center;
  padding-top: 17px;
}
.art {
  width: 76px;
  height: 76px;
  overflow: visible;
  filter: drop-shadow(0 2px 3px rgba(0, 0, 0, 0.35));
}
.badge {
  position: absolute;
  right: -1px;
  top: 8px;
  width: 36px;
  height: 36px;
  border-radius: 50%;
  background: #dc4b3e;
  color: #fff;
  font-size: 20px;
  font-weight: 500;
  line-height: 36px;
  text-align: center;
}
.running {
  position: absolute;
  left: 46px;
  bottom: 3px;
  width: 8px;
  height: 8px;
  border-radius: 50%;
  background: #ac90d0;
}
.dsep {
  flex: none;
  width: 2px;
  height: 92px;
  margin: 14px 21px 0 23px;
  background: #77559a;
}
</style>
